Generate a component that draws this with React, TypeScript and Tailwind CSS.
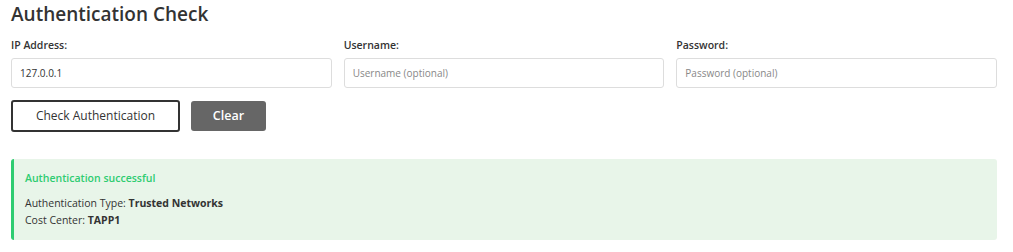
import React, { useState } from 'react';

export default function App() {
  const [ip, setIp] = useState('127.0.0.1');
  const [username, setUsername] = useState('');
  const [password, setPassword] = useState('');

  const clear = () => {
    setIp('');
    setUsername('');
    setPassword('');
  };

  const inputCls =
    'w-full h-[30px] border border-[#ddd] rounded-[3px] px-[8px] text-[10px] text-[#333] placeholder:text-[#888] outline-none';

  return (
    <div className="bg-white px-[11px] pr-[16px] text-[#333] font-['Open_Sans',sans-serif]">
      <h2 className="text-[19px] font-semibold leading-[28px] text-[#333]">Authentication Check</h2>

      <div className="grid grid-cols-3 gap-x-[12px] mt-[10px]">
        <div>
          <label className="block text-[10.5px] font-semibold leading-[14px] mb-[6px]">IP Address:</label>
          <input value={ip} onChange={e => setIp(e.target.value)} className={inputCls} />
        </div>
        <div>
          <label className="block text-[10.5px] font-semibold leading-[14px] mb-[6px]">Username:</label>
          <input
            value={username}
            onChange={e => setUsername(e.target.value)}
            placeholder="Username (optional)"
            className={inputCls}
          />
        </div>
        <div>
          <label className="block text-[10.5px] font-semibold leading-[14px] mb-[6px]">Password:</label>
          <input
            type="password"
            value={password}
            onChange={e => setPassword(e.target.value)}
            placeholder="Password (optional)"
            className={inputCls}
          />
        </div>
      </div>

      <div className="flex items-center gap-[11px] mt-[12px]">
        <button className="w-[169px] h-[32px] border-2 border-[#333] rounded-[3px] bg-white text-[12px] text-[#333]">
          Check Authentication
        </button>
        <button onClick={clear} className="w-[75px] h-[30px] rounded-[3px] bg-[#666] text-white text-[12.5px] font-semibold">
          Clear
        </button>
      </div>

      <div className="mt-[27px] bg-[#e8f5e9] border-l-[3px] border-[#2ecc71] rounded-[3px] pl-[11px] pt-[11px] pb-[11.5px]">
        <div className="text-[10.5px] font-semibold text-[#2ecc71] leading-[16px]">Authentication successful</div>
        <div className="mt-[8.5px] text-[10.5px] leading-[17px] text-[#333]">
          Authentication Type: <strong className="font-bold">Trusted Networks</strong>
        </div>
        <div className="text-[10.5px] leading-[17px] text-[#333]">
          Cost Center: <strong className="font-bold">TAPP1</strong>
        </div>
      </div>
    </div>
  );
}
